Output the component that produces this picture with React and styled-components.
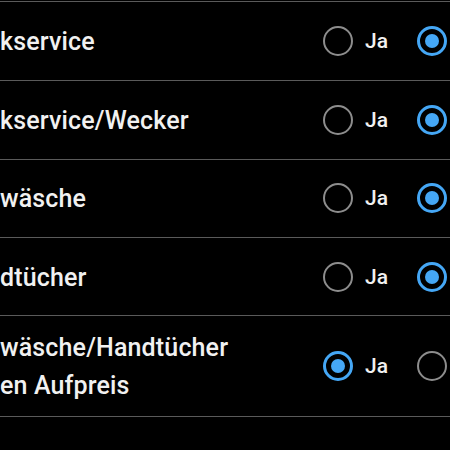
import styled, { createGlobalStyle } from "styled-components";

const GlobalStyle = createGlobalStyle`
  html, body {
    margin: 0;
    padding: 0;
    background: #000;
    overflow: hidden;
  }
  body {
    font-family: Roboto, "Noto Sans", "Liberation Sans", sans-serif;
    color: #f1f1f1;
  }
`;

const List = styled.ul`
  list-style: none;
  margin: 1px 0 0;
  padding: 0;
  width: 560px;
  border-top: 1px solid #5a5a5a;
`;

const Row = styled.li`
  display: grid;
  grid-template-columns: 323px auto;
  align-items: center;
  min-height: ${(p) => (p.$tall ? "101px" : "78.4px")};
  border-bottom: 1px solid #5a5a5a;
  box-sizing: border-box;
  &:first-child {
    min-height: 79.2px;
  }
`;

const Label = styled.span`
  font-size: 25px;
  font-weight: 500;
  line-height: 38px;
  letter-spacing: 0.15px;
  white-space: pre-line;
  padding-top: 2px;
`;

const Options = styled.div`
  display: flex;
  align-items: center;
  gap: 29px;
`;

const Option = styled.label`
  display: flex;
  align-items: center;
  gap: 12px;
  font-size: 21px;
  font-weight: 500;
  color: #f1f1f1;
`;

const Radio = styled.span`
  position: relative;
  flex: none;
  width: 30px;
  height: 30px;
  box-sizing: border-box;
  border-radius: 50%;
  border: ${(p) => (p.$checked ? "3px solid #45a7f5" : "2.5px solid #8d8d8d")};
  &::after {
    content: "";
    display: ${(p) => (p.$checked ? "block" : "none")};
    position: absolute;
    top: 50%;
    left: 50%;
    width: 14px;
    height: 14px;
    margin: -7px 0 0 -7px;
    border-radius: 50%;
    background: #45a7f5;
  }
`;

const rows = [
  { label: "kservice", yes: false },
  { label: "kservice/Wecker", yes: false },
  { label: "wäsche", yes: false },
  { label: "dtücher", yes: false },
  { label: "wäsche/Handtücher\nen Aufpreis", yes: true, tall: true },
];

export default function App() {
  return (
    <>
      <GlobalStyle />
      <List>
        {rows.map((r) => (
          <Row key={r.label} $tall={r.tall}>
            <Label>{r.label}</Label>
            <Options>
              <Option>
                <Radio $checked={r.yes} />
                Ja
              </Option>
              <Option>
                <Radio $checked={!r.yes} />
                Nein
              </Option>
            </Options>
          </Row>
        ))}
      </List>
    </>
  );
}
